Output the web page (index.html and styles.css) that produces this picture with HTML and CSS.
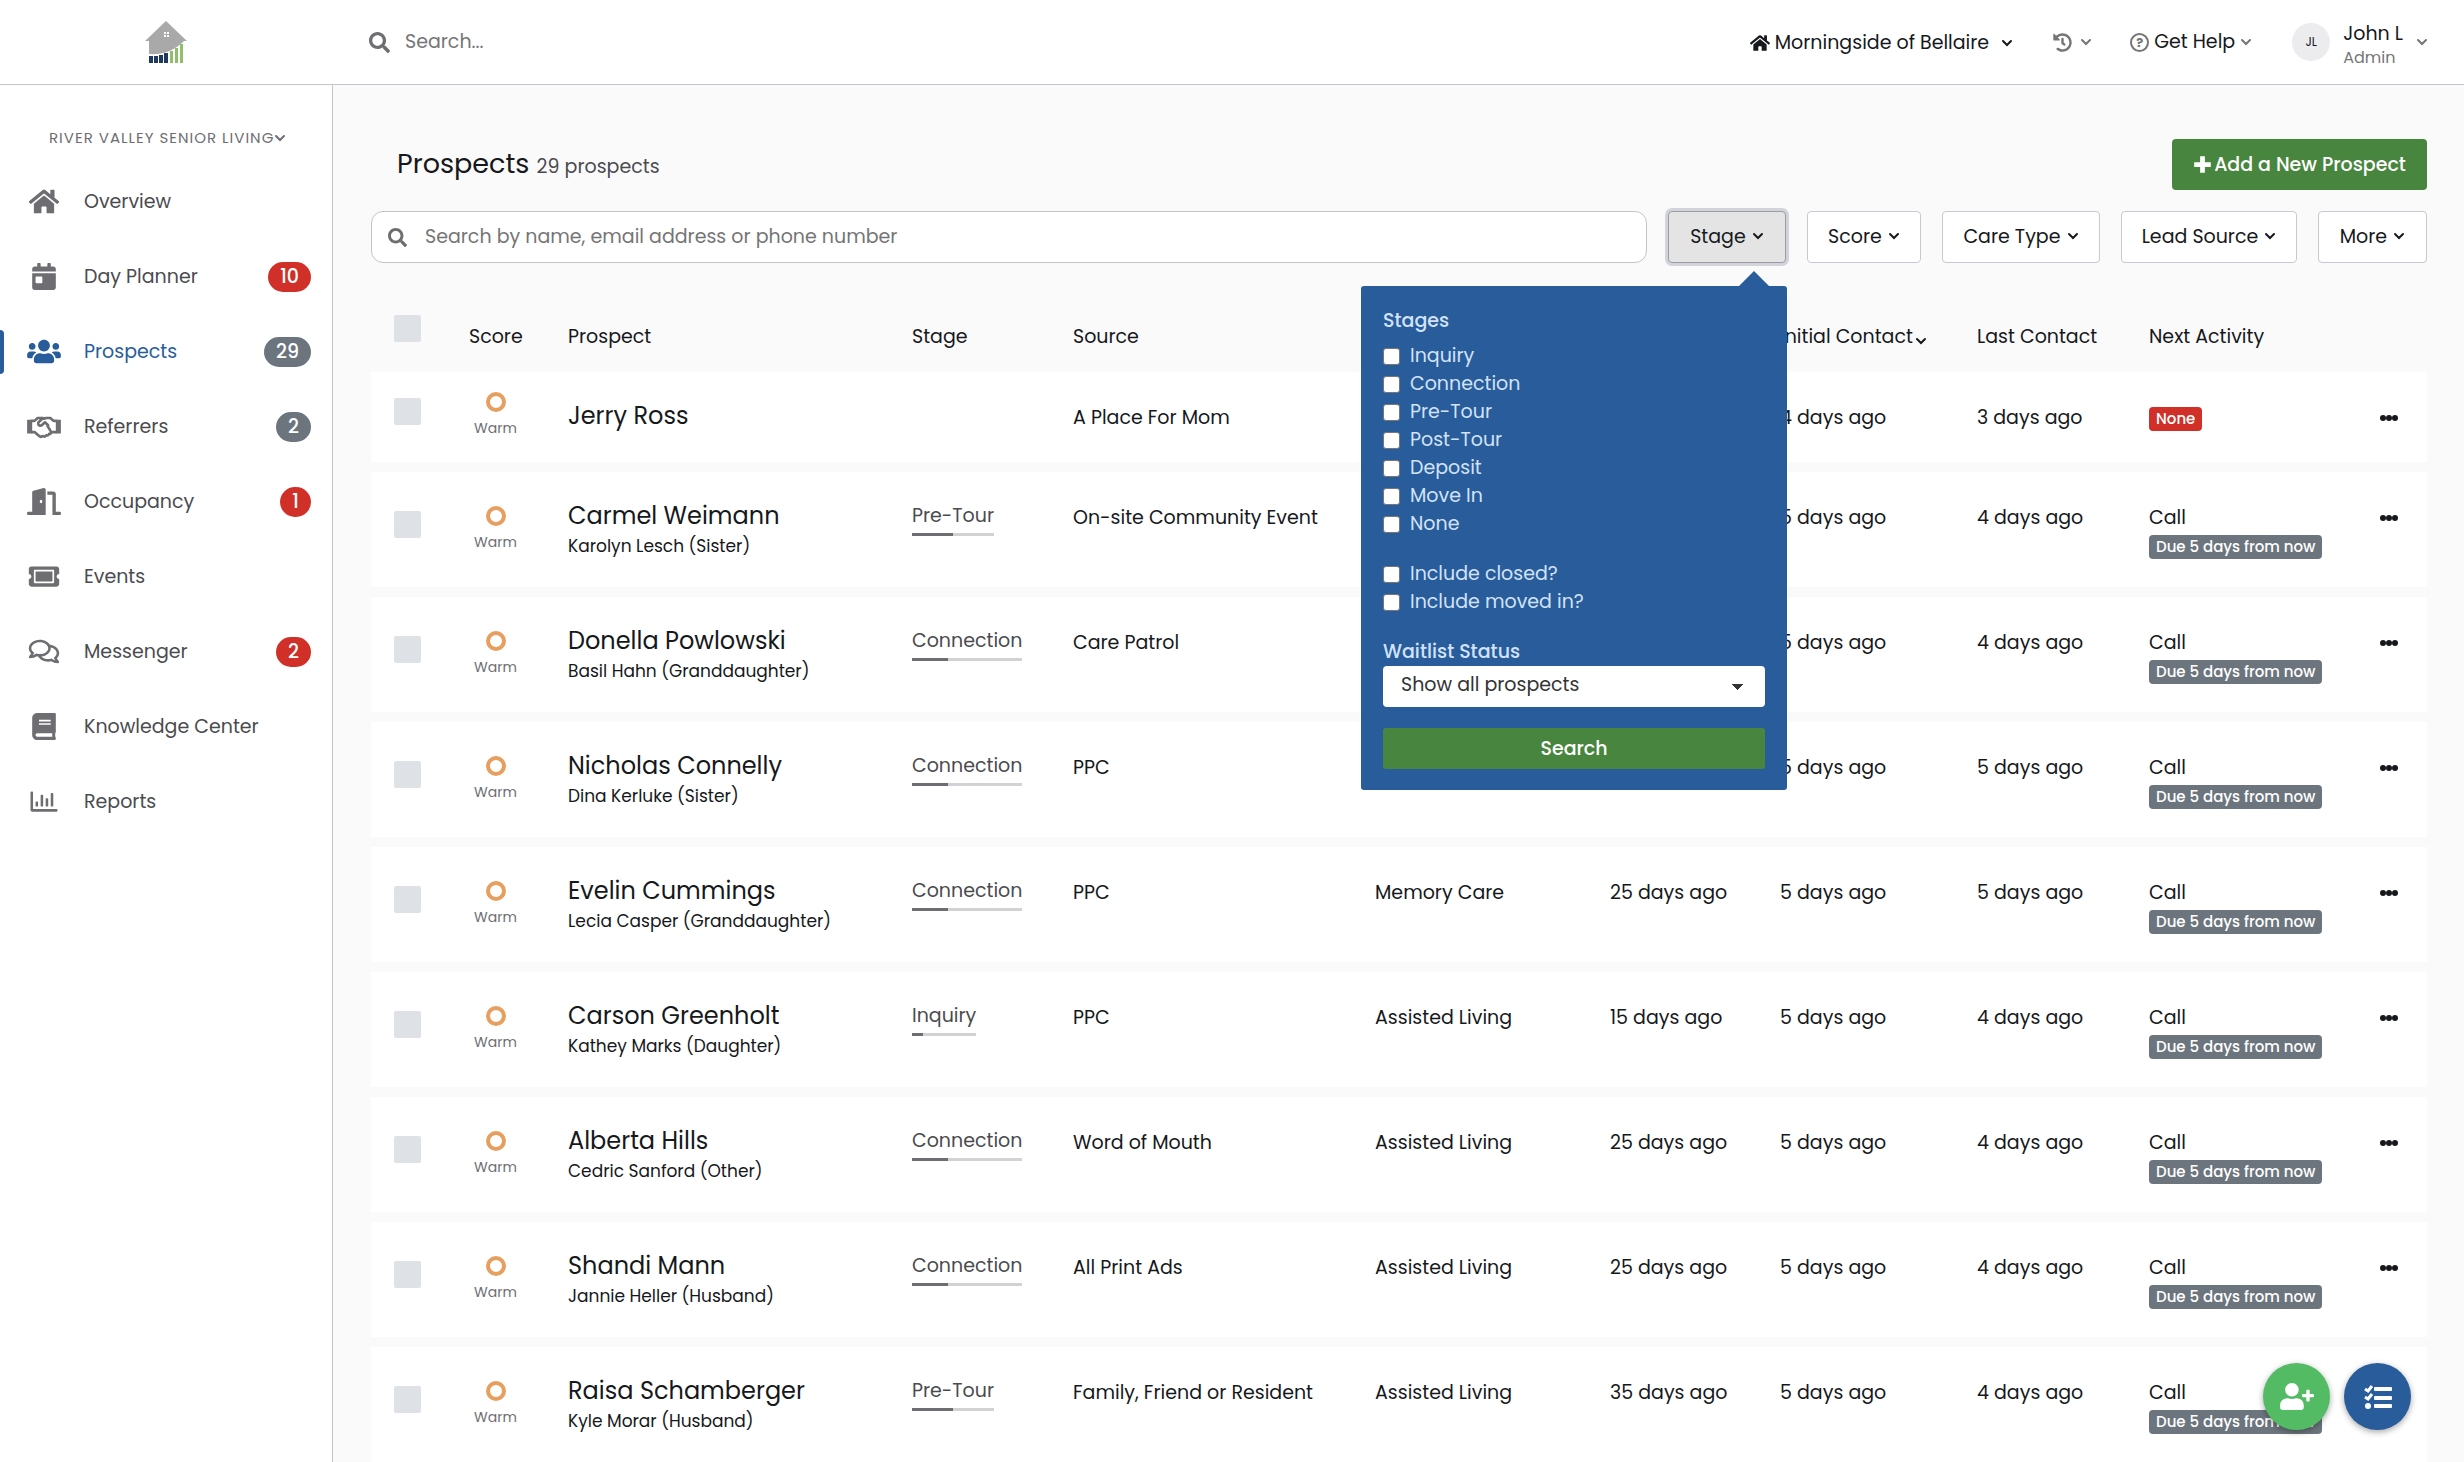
FILE: index.html
```
<!DOCTYPE html>
<html lang="en">
<head>
    <meta charset="utf-8">
    <meta name="viewport" content="width=device-width, initial-scale=1.0">
    <title>Prospects</title>
    <link rel="stylesheet" href="styles.css">
</head>
<body>
    <svg class="sprite" aria-hidden="true">
        <symbol id="i-search" viewBox="0 0 512 512"><path d="M505 442.7L405.3 343c-4.5-4.5-10.6-7-17-7H372c27.6-35.3 44-79.7 44-128C416 93.1 322.9 0 208 0S0 93.1 0 208s93.1 208 208 208c48.3 0 92.7-16.4 128-44v16.3c0 6.4 2.5 12.5 7 17l99.7 99.7c9.4 9.4 24.6 9.4 33.9 0l28.3-28.3c9.4-9.4 9.4-24.6.1-34zM208 336c-70.7 0-128-57.2-128-128 0-70.7 57.2-128 128-128 70.7 0 128 57.2 128 128 0 70.7-57.2 128-128 128z"/></symbol>
        <symbol id="i-home" viewBox="0 0 576 512"><path d="M280.37 148.26L96 300.11V464a16 16 0 0 0 16 16l112.06-.29a16 16 0 0 0 15.92-16V368a16 16 0 0 1 16-16h64a16 16 0 0 1 16 16v95.64a16 16 0 0 0 16 16.05L464 480a16 16 0 0 0 16-16V300L295.67 148.26a12.19 12.19 0 0 0-15.3 0zM571.6 251.47L488 182.56V44.05a12 12 0 0 0-12-12h-56a12 12 0 0 0-12 12v72.61L318.47 43a48 48 0 0 0-61 0L4.34 251.47a12 12 0 0 0-1.6 16.9l25.5 31A12 12 0 0 0 45.15 301l235.22-193.74a12.19 12.19 0 0 1 15.3 0L530.9 301a12 12 0 0 0 16.9-1.6l25.5-31a12 12 0 0 0-1.7-16.93z"/></symbol>
        <symbol id="i-day" viewBox="0 0 448 512"><path d="M0 464c0 26.5 21.5 48 48 48h352c26.5 0 48-21.5 48-48V192H0v272zm64-192c0-8.8 7.2-16 16-16h96c8.8 0 16 7.2 16 16v96c0 8.8-7.2 16-16 16H80c-8.8 0-16-7.2-16-16v-96zM400 64h-48V16c0-8.8-7.2-16-16-16h-32c-8.8 0-16 7.2-16 16v48H160V16c0-8.8-7.2-16-16-16h-32c-8.8 0-16 7.2-16 16v48H48C21.5 64 0 85.5 0 112v48h448v-48c0-26.5-21.5-48-48-48z"/></symbol>
        <symbol id="i-users" viewBox="0 0 640 512"><path d="M96 224c35.3 0 64-28.7 64-64s-28.7-64-64-64-64 28.7-64 64 28.7 64 64 64zm448 0c35.3 0 64-28.7 64-64s-28.7-64-64-64-64 28.7-64 64 28.7 64 64 64zm32 32h-64c-17.6 0-33.5 7.1-45.1 18.6 40.3 22.1 68.9 62 75.1 109.4h66c17.7 0 32-14.3 32-32v-32c0-35.3-28.7-64-64-64zm-256 0c61.9 0 112-50.1 112-112S381.9 32 320 32 208 82.1 208 144s50.1 112 112 112zm76.8 32h-8.3c-20.8 10-43.9 16-68.5 16s-47.6-6-68.5-16h-8.3C179.6 288 128 339.6 128 403.2V432c0 26.5 21.5 48 48 48h288c26.5 0 48-21.5 48-48v-28.8c0-63.6-51.6-115.2-115.2-115.2zm-223.7-13.4C161.5 263.1 145.6 256 128 256H64c-35.3 0-64 28.7-64 64v32c0 17.7 14.3 32 32 32h65.9c6.3-47.4 34.9-87.3 75.2-109.4z"/></symbol>
        <symbol id="i-handshake" viewBox="0 0 640 512">
            <path d="M0 126h96v262H0zM544 126h96v262h-96z"/>
            <path fill="none" stroke="currentColor" stroke-width="50" stroke-linejoin="round" stroke-linecap="round" d="M90 150h50l60-56h86l34 16 38-16h82l60 56h50M90 362h50l88 76c22 20 48 18 66-2 26 16 52 10 66-12 26 8 46-4 56-28 20 2 38-8 40-30 1-14-6-22-12-28L388 248M300 96l-78 74c-22 24-14 56 10 66 20 8 38 4 50-8l56-52 60 56M468 362h82"/>
        </symbol>
        <symbol id="i-door" viewBox="0 0 640 512"><path d="M624 448h-80V113.45C544 86.19 522.47 64 496 64H384v64h96v384h144c8.84 0 16-7.16 16-16v-32c0-8.84-7.16-16-16-16zM312.24 1.01l-192 49.74C105.99 54.44 96 67.7 96 82.92V448H16c-8.84 0-16 7.16-16 16v32c0 8.84 7.16 16 16 16h336V33.18c0-21.58-19.56-37.41-39.76-32.17zM264 288c-13.25 0-24-14.33-24-32s10.75-32 24-32 24 14.33 24 32-10.75 32-24 32z"/></symbol>
        <symbol id="i-ticket" viewBox="0 0 576 512"><path d="M128 160h320v192H128V160zm400 96c0 26.51 21.49 48 48 48v96c0 26.51-21.49 48-48 48H48c-26.51 0-48-21.49-48-48v-96c26.51 0 48-21.49 48-48s-21.49-48-48-48v-96c0-26.51 21.49-48 48-48h480c26.51 0 48 21.49 48 48v96c-26.51 0-48 21.49-48 48zm-48-104c0-13.255-10.745-24-24-24H120c-13.255 0-24 10.745-24 24v208c0 13.255 10.745 24 24 24h336c13.255 0 24-10.745 24-24V152z"/></symbol>
        <symbol id="i-comments" viewBox="0 0 576 512"><path d="M532 386.2c27.5-27.1 44-61.1 44-98.2 0-80-76.5-146.1-176.2-157.9C368.3 72.5 294.3 32 208 32 93.1 32 0 103.6 0 192c0 37 16.5 71 44 98.2-15.3 30.7-37.3 54.5-37.7 54.9-6.3 6.7-8.1 16.5-4.4 25 3.6 8.5 12 14 21.2 14 53.5 0 96.7-20.2 125.2-38.8 9.2 2.1 18.7 3.7 28.4 4.9C208.1 407.6 281.8 448 368 448c20.8 0 40.8-2.4 59.8-6.8C456.3 459.7 499.4 480 553 480c9.2 0 17.5-5.5 21.2-14 3.6-8.5 1.9-18.3-4.4-25-.4-.3-22.5-24.1-37.8-54.8zm-392.8-92.3L122.1 305c-14.1 9.1-28.5 16.3-43.1 21.4 2.7-4.7 5.4-9.7 8-14.8l15.5-31.1L77.7 256C64.2 242.6 48 220.7 48 192c0-60.7 73.3-112 160-112s160 51.3 160 112-73.3 112-160 112c-16.5 0-33-1.9-49-5.6l-19.8-4.5zM498.3 352l-24.7 24.4 15.5 31.1c2.6 5.1 5.3 10.1 8 14.8-14.6-5.1-29-12.3-43.1-21.4l-17.1-11.1-19.9 4.6c-16 3.7-32.5 5.6-49 5.6-54 0-102.2-20.1-131.3-49.7C338 339.5 416 272.9 416 192c0-3.4-.4-6.7-.7-10C479.7 196.5 528 238.8 528 288c0 28.7-16.2 50.6-29.7 64z"/></symbol>
        <symbol id="i-book" viewBox="0 0 448 512"><path d="M448 360V24c0-13.3-10.7-24-24-24H96C43 0 0 43 0 96v320c0 53 43 96 96 96h328c13.3 0 24-10.7 24-24v-16c0-7.5-3.5-14.3-8.9-18.7-4.2-15.4-4.2-59.3 0-74.7 5.4-4.3 8.9-11.1 8.9-18.6zM128 134c0-3.3 2.7-6 6-6h212c3.3 0 6 2.7 6 6v20c0 3.3-2.7 6-6 6H134c-3.3 0-6-2.7-6-6v-20zm0 64c0-3.3 2.7-6 6-6h212c3.3 0 6 2.7 6 6v20c0 3.3-2.7 6-6 6H134c-3.3 0-6-2.7-6-6v-20zm253.4 250H96c-17.7 0-32-14.3-32-32 0-17.6 14.4-32 32-32h285.4c-1.9 17.1-1.9 46.9 0 64z"/></symbol>
        <symbol id="i-chart" viewBox="0 0 512 512"><path d="M396.8 352h22.4c6.4 0 12.8-6.4 12.8-12.8V108.8c0-6.4-6.4-12.8-12.8-12.8h-22.4c-6.4 0-12.8 6.4-12.8 12.8v230.4c0 6.4 6.4 12.8 12.8 12.8zm-192 0h22.4c6.4 0 12.8-6.4 12.8-12.8V140.8c0-6.4-6.4-12.8-12.8-12.8h-22.4c-6.4 0-12.8 6.4-12.8 12.8v198.4c0 6.4 6.4 12.8 12.8 12.8zm96 0h22.4c6.4 0 12.8-6.4 12.8-12.8V204.8c0-6.4-6.4-12.8-12.8-12.8h-22.4c-6.4 0-12.8 6.4-12.8 12.8v134.4c0 6.4 6.4 12.8 12.8 12.8zM496 400H48V80c0-8.84-7.16-16-16-16H16C7.16 64 0 71.16 0 80v336c0 17.67 14.33 32 32 32h464c8.84 0 16-7.16 16-16v-16c0-8.84-7.16-16-16-16zm-387.2-48h22.4c6.4 0 12.8-6.4 12.8-12.8v-70.4c0-6.4-6.4-12.8-12.8-12.8h-22.4c-6.4 0-12.8 6.4-12.8 12.8v70.4c0 6.4 6.4 12.8 12.8 12.8z"/></symbol>
        <symbol id="i-history" viewBox="0 0 512 512"><path d="M504 255.531c.253 136.64-111.18 248.372-247.82 248.468-59.015.042-113.223-20.53-155.822-54.911-11.077-8.94-11.905-25.541-1.839-35.607l11.267-11.267c8.609-8.609 22.353-9.551 31.891-1.984C173.062 425.135 212.781 440 256 440c101.705 0 184-82.311 184-184 0-101.705-82.311-184-184-184-48.814 0-93.149 18.969-126.068 49.932l50.754 50.754c10.08 10.08 2.941 27.314-11.313 27.314H24c-8.837 0-16-7.163-16-16V38.627c0-14.254 17.234-21.393 27.314-11.314l49.372 49.372C129.209 34.136 189.552 8 256 8c136.81 0 247.747 110.78 248 247.531zm-180.912 78.784l9.823-12.63c8.138-10.463 6.253-25.542-4.21-33.679L288 256.349V152c0-13.255-10.745-24-24-24h-16c-13.255 0-24 10.745-24 24v135.651l65.409 50.874c10.463 8.137 25.541 6.253 33.679-4.21z"/></symbol>
        <symbol id="i-chevron" viewBox="0 0 12 12"><path fill="none" stroke="currentColor" stroke-width="2" stroke-linecap="round" d="M2 4l4 4 4-4"/></symbol>
        <symbol id="i-plus" viewBox="0 0 16 16"><path d="M6 1h4v5h5v4h-5v5H6v-5H1V6h5z"/></symbol>
        <symbol id="i-dots" viewBox="0 0 18 6"><circle cx="3" cy="3" r="3"/><circle cx="9" cy="3" r="3"/><circle cx="15" cy="3" r="3"/></symbol>
        <symbol id="i-user-plus" viewBox="0 0 640 512"><path d="M624 208h-64v-64c0-8.8-7.2-16-16-16h-32c-8.8 0-16 7.2-16 16v64h-64c-8.8 0-16 7.2-16 16v32c0 8.8 7.2 16 16 16h64v64c0 8.8 7.2 16 16 16h32c8.8 0 16-7.2 16-16v-64h64c8.8 0 16-7.2 16-16v-32c0-8.8-7.2-16-16-16zm-400 48c70.7 0 128-57.3 128-128S294.7 0 224 0 96 57.3 96 128s57.3 128 128 128zm89.6 32h-16.7c-22.2 10.2-46.9 16-72.9 16s-50.6-5.8-72.9-16h-16.7C60.2 288 0 348.2 0 422.4V464c0 26.5 21.5 48 48 48h352c26.5 0 48-21.5 48-48v-41.6c0-74.2-60.2-134.4-134.4-134.4z"/></symbol>
        <symbol id="i-tasks" viewBox="0 0 28 24"><rect x="10" y="2" width="18" height="4" rx="1"/><rect x="10" y="11" width="18" height="4" rx="1"/><rect x="10" y="19" width="18" height="4" rx="1"/><circle cx="4" cy="21" r="3"/><path fill="none" stroke="currentColor" stroke-width="3" d="M1 4l3 2 4-5M1 12l3 2 4-5"/></symbol>
    </svg>

    <header class="topbar">
        <a class="logo" href="#" aria-label="Home">
            <svg viewBox="0 0 42 42" width="42" height="42">
                <path fill="#a9a9a9" d="M21 0l21 20h-3c-9 9-20 14-35 13V20H0z"/>
                <path fill="#fff" d="M19 11h2v2h-2zM22 11h2v2h-2zM19 14h2v2h-2zM22 14h2v2h-2z"/>
                <path fill="#1f3a5f" d="M4 35h4v7H4zM9 35h4v7H9zM14 34h4v8h-4zM19 32h4v10h-4z"/>
                <path fill="#8fbf6a" d="M25 30h3v12h-3zM30 27h3v15h-3zM35 23h3v19h-3z"/>
            </svg>
        </a>
        <div class="top-search">
            <svg class="icon"><use href="#i-search"/></svg>
            <input type="search" placeholder="Search..." aria-label="Search">
        </div>
        <button class="top-item community" type="button">
            <svg class="icon"><use href="#i-home"/></svg>
            <span>Morningside of Bellaire</span>
            <svg class="chev"><use href="#i-chevron"/></svg>
        </button>
        <button class="top-item history" type="button" aria-label="History">
            <svg class="icon"><use href="#i-history"/></svg>
            <svg class="chev"><use href="#i-chevron"/></svg>
        </button>
        <button class="top-item help" type="button">
            <span class="help-mark">?</span>
            <span>Get Help</span>
            <svg class="chev"><use href="#i-chevron"/></svg>
        </button>
        <button class="top-item account" type="button">
            <span class="avatar">JL</span>
            <span class="who">John L<small>Admin</small></span>
            <svg class="chev"><use href="#i-chevron"/></svg>
        </button>
    </header>

    <div class="shell">
        <nav class="sidebar">
            <button class="org" type="button">River Valley Senior Living<svg class="chev"><use href="#i-chevron"/></svg></button>
            <a class="nav-link" href="#"><svg class="icon"><use href="#i-home"/></svg>Overview</a>
            <a class="nav-link" href="#"><svg class="icon"><use href="#i-day"/></svg>Day Planner<span class="pill red">10</span></a>
            <a class="nav-link active" href="#"><svg class="icon"><use href="#i-users"/></svg>Prospects<span class="pill">29</span></a>
            <a class="nav-link" href="#"><svg class="icon"><use href="#i-handshake"/></svg>Referrers<span class="pill">2</span></a>
            <a class="nav-link" href="#"><svg class="icon"><use href="#i-door"/></svg>Occupancy<span class="pill red">1</span></a>
            <a class="nav-link" href="#"><svg class="icon"><use href="#i-ticket"/></svg>Events</a>
            <a class="nav-link" href="#"><svg class="icon"><use href="#i-comments"/></svg>Messenger<span class="pill red">2</span></a>
            <a class="nav-link" href="#"><svg class="icon"><use href="#i-book"/></svg>Knowledge Center</a>
            <a class="nav-link" href="#"><svg class="icon"><use href="#i-chart"/></svg>Reports</a>
        </nav>

        <main class="content">
            <div class="page-head">
                <h1>Prospects <small>29 prospects</small></h1>
                <button class="btn-add" type="button"><svg><use href="#i-plus"/></svg>Add a New Prospect</button>
            </div>

            <div class="filters">
                <div class="search-box">
                    <svg class="icon"><use href="#i-search"/></svg>
                    <input type="search" placeholder="Search by name, email address or phone number" aria-label="Search prospects">
                </div>
                <div class="filter">
                    <button class="btn-filter open" type="button" aria-expanded="true">Stage <svg class="chev"><use href="#i-chevron"/></svg></button>
                    <form class="stage-menu">
                        <h2>Stages</h2>
                        <label><input type="checkbox">Inquiry</label>
                        <label><input type="checkbox">Connection</label>
                        <label><input type="checkbox">Pre-Tour</label>
                        <label><input type="checkbox">Post-Tour</label>
                        <label><input type="checkbox">Deposit</label>
                        <label><input type="checkbox">Move In</label>
                        <label><input type="checkbox">None</label>
                        <label class="group"><input type="checkbox">Include closed?</label>
                        <label><input type="checkbox">Include moved in?</label>
                        <label class="group heading" for="waitlist">Waitlist Status</label>
                        <select id="waitlist">
                            <option>Show all prospects</option>
                        </select>
                        <button class="btn-search" type="button">Search</button>
                    </form>
                </div>
                <button class="btn-filter" type="button">Score <svg class="chev"><use href="#i-chevron"/></svg></button>
                <button class="btn-filter" type="button">Care Type <svg class="chev"><use href="#i-chevron"/></svg></button>
                <button class="btn-filter" type="button">Lead Source <svg class="chev"><use href="#i-chevron"/></svg></button>
                <button class="btn-filter" type="button">More <svg class="chev"><use href="#i-chevron"/></svg></button>
            </div>

            <table class="prospects">
                <colgroup>
                    <col class="c-check"><col class="c-score"><col><col class="c-stage"><col class="c-source"><col class="c-care">
                    <col class="c-created"><col class="c-initial"><col class="c-last"><col class="c-next"><col class="c-menu">
                </colgroup>
                <thead>
                    <tr>
                        <th class="check"><input type="checkbox" aria-label="Select all"></th>
                        <th>Score</th>
                        <th>Prospect</th>
                        <th>Stage</th>
                        <th>Source</th>
                        <th></th>
                        <th></th>
                        <th>Initial Contact<svg class="chev sort"><use href="#i-chevron"/></svg></th>
                        <th>Last Contact</th>
                        <th>Next Activity</th>
                        <th></th>
                    </tr>
                </thead>
                <tbody>
                    <tr class="short">
                        <td class="check"><input type="checkbox" aria-label="Select Jerry Ross"></td>
                        <td class="score"><span>Warm</span></td>
                        <td class="name"><a href="#">Jerry Ross</a></td>
                        <td></td>
                        <td>A Place For Mom</td>
                        <td></td>
                        <td></td>
                        <td>4 days ago</td>
                        <td>3 days ago</td>
                        <td><span class="due none">None</span></td>
                        <td><button class="more" type="button" aria-label="More"><svg><use href="#i-dots"/></svg></button></td>
                    </tr>
                    <tr>
                        <td class="check"><input type="checkbox" aria-label="Select Carmel Weimann"></td>
                        <td class="score"><span>Warm</span></td>
                        <td class="name"><a href="#">Carmel Weimann</a><small>Karolyn Lesch (Sister)</small></td>
                        <td class="stage"><span>Pre-Tour<i><b style="width: 50%"></b></i></span></td>
                        <td>On-site Community Event</td>
                        <td></td>
                        <td></td>
                        <td>5 days ago</td>
                        <td>4 days ago</td>
                        <td>Call<span class="due">Due 5 days from now</span></td>
                        <td><button class="more" type="button" aria-label="More"><svg><use href="#i-dots"/></svg></button></td>
                    </tr>
                    <tr>
                        <td class="check"><input type="checkbox" aria-label="Select Donella Powlowski"></td>
                        <td class="score"><span>Warm</span></td>
                        <td class="name"><a href="#">Donella Powlowski</a><small>Basil Hahn (Granddaughter)</small></td>
                        <td class="stage"><span>Connection<i><b style="width: 33%"></b></i></span></td>
                        <td>Care Patrol</td>
                        <td></td>
                        <td></td>
                        <td>5 days ago</td>
                        <td>4 days ago</td>
                        <td>Call<span class="due">Due 5 days from now</span></td>
                        <td><button class="more" type="button" aria-label="More"><svg><use href="#i-dots"/></svg></button></td>
                    </tr>
                    <tr>
                        <td class="check"><input type="checkbox" aria-label="Select Nicholas Connelly"></td>
                        <td class="score"><span>Warm</span></td>
                        <td class="name"><a href="#">Nicholas Connelly</a><small>Dina Kerluke (Sister)</small></td>
                        <td class="stage"><span>Connection<i><b style="width: 33%"></b></i></span></td>
                        <td>PPC</td>
                        <td></td>
                        <td></td>
                        <td>5 days ago</td>
                        <td>5 days ago</td>
                        <td>Call<span class="due">Due 5 days from now</span></td>
                        <td><button class="more" type="button" aria-label="More"><svg><use href="#i-dots"/></svg></button></td>
                    </tr>
                    <tr>
                        <td class="check"><input type="checkbox" aria-label="Select Evelin Cummings"></td>
                        <td class="score"><span>Warm</span></td>
                        <td class="name"><a href="#">Evelin Cummings</a><small>Lecia Casper (Granddaughter)</small></td>
                        <td class="stage"><span>Connection<i><b style="width: 33%"></b></i></span></td>
                        <td>PPC</td>
                        <td>Memory Care</td>
                        <td>25 days ago</td>
                        <td>5 days ago</td>
                        <td>5 days ago</td>
                        <td>Call<span class="due">Due 5 days from now</span></td>
                        <td><button class="more" type="button" aria-label="More"><svg><use href="#i-dots"/></svg></button></td>
                    </tr>
                    <tr>
                        <td class="check"><input type="checkbox" aria-label="Select Carson Greenholt"></td>
                        <td class="score"><span>Warm</span></td>
                        <td class="name"><a href="#">Carson Greenholt</a><small>Kathey Marks (Daughter)</small></td>
                        <td class="stage"><span>Inquiry<i><b style="width: 17%"></b></i></span></td>
                        <td>PPC</td>
                        <td>Assisted Living</td>
                        <td>15 days ago</td>
                        <td>5 days ago</td>
                        <td>4 days ago</td>
                        <td>Call<span class="due">Due 5 days from now</span></td>
                        <td><button class="more" type="button" aria-label="More"><svg><use href="#i-dots"/></svg></button></td>
                    </tr>
                    <tr>
                        <td class="check"><input type="checkbox" aria-label="Select Alberta Hills"></td>
                        <td class="score"><span>Warm</span></td>
                        <td class="name"><a href="#">Alberta Hills</a><small>Cedric Sanford (Other)</small></td>
                        <td class="stage"><span>Connection<i><b style="width: 33%"></b></i></span></td>
                        <td>Word of Mouth</td>
                        <td>Assisted Living</td>
                        <td>25 days ago</td>
                        <td>5 days ago</td>
                        <td>4 days ago</td>
                        <td>Call<span class="due">Due 5 days from now</span></td>
                        <td><button class="more" type="button" aria-label="More"><svg><use href="#i-dots"/></svg></button></td>
                    </tr>
                    <tr>
                        <td class="check"><input type="checkbox" aria-label="Select Shandi Mann"></td>
                        <td class="score"><span>Warm</span></td>
                        <td class="name"><a href="#">Shandi Mann</a><small>Jannie Heller (Husband)</small></td>
                        <td class="stage"><span>Connection<i><b style="width: 33%"></b></i></span></td>
                        <td>All Print Ads</td>
                        <td>Assisted Living</td>
                        <td>25 days ago</td>
                        <td>5 days ago</td>
                        <td>4 days ago</td>
                        <td>Call<span class="due">Due 5 days from now</span></td>
                        <td><button class="more" type="button" aria-label="More"><svg><use href="#i-dots"/></svg></button></td>
                    </tr>
                    <tr>
                        <td class="check"><input type="checkbox" aria-label="Select Raisa Schamberger"></td>
                        <td class="score"><span>Warm</span></td>
                        <td class="name"><a href="#">Raisa Schamberger</a><small>Kyle Morar (Husband)</small></td>
                        <td class="stage"><span>Pre-Tour<i><b style="width: 50%"></b></i></span></td>
                        <td>Family, Friend or Resident</td>
                        <td>Assisted Living</td>
                        <td>35 days ago</td>
                        <td>5 days ago</td>
                        <td>4 days ago</td>
                        <td>Call<span class="due">Due 5 days from now</span></td>
                        <td></td>
                    </tr>
                </tbody>
            </table>
        </main>
    </div>

    <div class="fabs">
        <button class="fab green" type="button" aria-label="Add prospect"><svg><use href="#i-user-plus"/></svg></button>
        <button class="fab tasks" type="button" aria-label="Tasks"><svg><use href="#i-tasks"/></svg></button>
    </div>
</body>
</html>
```

FILE: styles.css
```
*, *::before {
    box-sizing: border-box;
}

body {
    margin: 0;
    height: 100vh;
    display: flex;
    flex-direction: column;
    overflow: hidden;
    font-family: "Poppins", "Inter", sans-serif;
    font-size: 19px;
    line-height: 28px;
    color: #16181b;
    background: #fafafa;
}

button, input, select {
    font: inherit;
    color: inherit;
}

button {
    border: 0;
    padding: 0;
    background: none;
}

a {
    color: inherit;
    text-decoration: none;
}

svg {
    fill: currentColor;
    flex: none;
}

.sprite {
    display: none;
}

.chev {
    width: 12px;
    height: 12px;
}

/* top bar */
.topbar {
    flex: none;
    display: flex;
    align-items: center;
    height: 85px;
    padding-right: 36px;
    background: #fff;
    border-bottom: 1px solid #c4c4cc;
}

.logo {
    display: flex;
    justify-content: center;
    width: 332px;
}

.top-search {
    flex: 1;
    display: flex;
    align-items: center;
    gap: 15px;
    padding-left: 37px;
    color: #6e6e72;
}

.top-search .icon {
    width: 21px;
    height: 21px;
}

input[type="search"] {
    flex: 1;
    border: 0;
    padding: 0;
    outline: 0;
    background: none;
    appearance: none;
}

input::placeholder {
    color: #757575;
    opacity: 1;
}

.top-item {
    display: flex;
    align-items: center;
    gap: 5px;
}

.community {
    padding-top: 2px;
}

.community .icon {
    width: 20px;
    height: 18px;
}

.community span {
    margin-right: 7px;
}

.history {
    gap: 8px;
    margin-left: 40px;
    color: #757575;
}

.history .icon {
    width: 19px;
    height: 19px;
}

.help {
    margin-left: 38px;
}

.help-mark {
    width: 19px;
    height: 19px;
    border: 2px solid #757575;
    border-radius: 50%;
    font-size: 13px;
    font-weight: 700;
    line-height: 15px;
    color: #757575;
}

.help .chev, .account .chev {
    color: #757575;
}

.account {
    gap: 13px;
    margin-left: 40px;
}

.avatar {
    width: 38px;
    height: 38px;
    border-radius: 50%;
    background: #ececef;
    font-size: 12px;
    line-height: 38px;
}

.who {
    padding-top: 8px;
    text-align: left;
    line-height: 24px;
}

.who small {
    display: block;
    font-size: 16px;
    color: #757575;
}

/* sidebar */
.shell {
    flex: 1;
    display: flex;
    min-height: 0;
}

.sidebar {
    flex: none;
    width: 333px;
    padding-top: 39px;
    background: #fff;
    border-right: 1px solid #c4c4cc;
}

.org {
    display: flex;
    align-items: center;
    margin: 0 0 12px 49px;
    font-size: 15px;
    text-transform: uppercase;
    letter-spacing: 1px;
    color: #6e6e72;
}

.nav-link {
    display: flex;
    align-items: center;
    height: 75px;
    padding: 0 21px 0 27px;
    color: #4b4b4f;
    position: relative;
}

.nav-link .icon {
    width: 34px;
    height: 27px;
    margin-right: 23px;
    color: #6e6e72;
}

.nav-link.active, .nav-link.active .icon {
    color: #285c9b;
}

.nav-link.active::before {
    content: "";
    position: absolute;
    left: 0;
    top: 16px;
    width: 4px;
    height: 44px;
    border-radius: 0 4px 4px 0;
    background: #285c9b;
}

.pill {
    margin-left: auto;
    padding: 0 12px;
    border-radius: 15px;
    font-weight: 500;
    line-height: 30px;
    color: #fff;
    background: #6c757d;
}

.pill.red {
    background: #d03027;
}

/* page */
.content {
    flex: 1;
    min-width: 0;
    padding: 54px 37px 0 38px;
    overflow: hidden;
}

.page-head {
    display: flex;
    justify-content: space-between;
    margin-bottom: 19px;
}

h1 {
    margin: 0;
    padding-left: 26px;
    font-size: 27px;
    font-weight: 400;
    line-height: 50px;
}

h1 small {
    font-size: 19px;
    color: #4b4b4f;
}

.btn-add {
    display: flex;
    align-items: center;
    justify-content: center;
    gap: 2px;
    width: 255px;
    height: 51px;
    border-radius: 4px;
    font-weight: 500;
    color: #fff;
    background: #48853e;
}

.btn-add svg {
    width: 19px;
    height: 19px;
}

.filters {
    display: grid;
    grid-template-columns: 1fr 118px 114px 158px 176px 109px;
    column-gap: 21px;
}

.search-box {
    display: flex;
    align-items: center;
    gap: 18px;
    height: 52px;
    padding: 0 16px;
    border: 1px solid #c4c4c8;
    border-radius: 12px;
    background: #fff;
    color: #6e6e72;
}

.search-box .icon {
    width: 19px;
    height: 19px;
}

.filter {
    position: relative;
}

.btn-filter {
    width: 100%;
    height: 52px;
    border: 1px solid #c8c8cf;
    border-radius: 4px;
    background: #fff;
}

.btn-filter .chev {
    margin-left: 1px;
    vertical-align: 1px;
}

.btn-filter.open {
    border-color: #9a9ba8;
    background: #e4e4e5;
    box-shadow: 0 0 0 3px #d3d4da;
}

.stage-menu {
    position: absolute;
    z-index: 2;
    top: 75px;
    right: -1px;
    width: 426px;
    padding: 21px 22px;
    border-radius: 3px;
    color: #d3e3f7;
    background: #285c9b;
}

.stage-menu::before {
    content: "";
    position: absolute;
    right: 18px;
    bottom: 100%;
    border: 15px solid transparent;
    border-top: 0;
    border-bottom-color: #285c9b;
}

.stage-menu h2 {
    margin: 0 0 7px;
    font-size: 19px;
    font-weight: 500;
    line-height: 28px;
}

.stage-menu label {
    display: flex;
    align-items: center;
}

.stage-menu label.group {
    margin-top: 22px;
}

.stage-menu label.heading {
    font-weight: 500;
}

.stage-menu input {
    appearance: none;
    width: 17px;
    height: 17px;
    margin: 0 10px 0 0;
    border: 1px solid #767676;
    border-radius: 3px;
    background: #fff;
}

.stage-menu select {
    appearance: none;
    display: block;
    width: 100%;
    height: 41px;
    padding: 0 18px 3px;
    border: 0;
    border-radius: 4px;
    color: #333;
    background: conic-gradient(from -45deg at 50% 100%, #333 90deg, transparent 0) right 22px center / 12px 6px no-repeat, #fff;
}

.btn-search {
    width: 100%;
    height: 41px;
    margin-top: 21px;
    border-radius: 3px;
    font-weight: 500;
    color: #fff;
    background: #48853e;
}

/* table */
.prospects {
    width: 100%;
    margin-top: 30px;
    border-collapse: separate;
    border-spacing: 0 10px;
    table-layout: fixed;
}

.c-check { width: 98px; }
.c-score { width: 99px; }
.c-stage { width: 161px; }
.c-source { width: 302px; }
.c-care { width: 235px; }
.c-created { width: 170px; }
.c-initial { width: 197px; }
.c-last { width: 172px; }
.c-next { width: 231px; }
.c-menu { width: 47px; }

.prospects th {
    height: 59px;
    padding: 20px 0 0;
    font-weight: 400;
    text-align: left;
    vertical-align: top;
    white-space: nowrap;
}

.prospects td {
    height: 115px;
    padding: 32px 0 0;
    vertical-align: top;
    background: #fff;
}

.prospects .short td {
    height: 90px;
}

.prospects .check {
    padding-left: 23px;
}

.prospects th.check {
    padding-top: 12px;
}

.prospects td.check {
    padding-top: 39px;
}

.prospects .short .check {
    padding-top: 26px;
}

.check input {
    appearance: none;
    display: block;
    width: 27px;
    height: 27px;
    margin: 0;
    border-radius: 2px;
    background: #dee2e6;
}

.sort {
    margin-left: 2px;
    vertical-align: -4px;
}

.prospects .score {
    padding-top: 34px;
}

.prospects .short .score {
    padding-top: 20px;
}

.score span {
    display: block;
    width: 53px;
    font-size: 14px;
    line-height: 20px;
    text-align: center;
    color: #6e6e72;
}

.score span::before {
    content: "";
    display: block;
    width: 20px;
    height: 20px;
    margin: 0 auto 6px;
    border: 4px solid #e69f5e;
    border-radius: 50%;
}

.prospects .name, .prospects .stage {
    padding-top: 30px;
}

.name a {
    display: block;
    font-size: 24px;
}

.name small {
    display: block;
    font-size: 17px;
    line-height: 32px;
}

.stage span {
    display: inline-block;
    color: #4b4b4f;
}

.stage i {
    display: block;
    height: 3px;
    margin-top: 3px;
    background: #d2d2d4;
}

.stage b {
    display: block;
    height: 3px;
    background: #6e6e72;
}

.due {
    display: block;
    width: fit-content;
    margin-top: 3px;
    padding: 0 7px;
    border-radius: 4px;
    font-size: 15px;
    font-weight: 500;
    line-height: 24px;
    color: #fff;
    background: #6c757d;
}

.due.none {
    background: #d03027;
}

.more {
    display: block;
    padding-top: 11px;
}

.more svg {
    display: block;
    width: 18px;
    height: 6px;
}

/* floating buttons */
.fabs {
    position: fixed;
    right: 53px;
    bottom: 32px;
    display: flex;
    gap: 14px;
}

.fab {
    display: flex;
    align-items: center;
    justify-content: center;
    width: 67px;
    height: 67px;
    border-radius: 50%;
    color: #fff;
    background: #285c9b;
    box-shadow: 0 2px 6px rgba(0, 0, 0, 0.35);
}

.fab.green {
    background: #54bb65;
}

.fab svg {
    width: 34px;
    height: 27px;
}

.fab.tasks svg {
    width: 28px;
    height: 24px;
}
```
